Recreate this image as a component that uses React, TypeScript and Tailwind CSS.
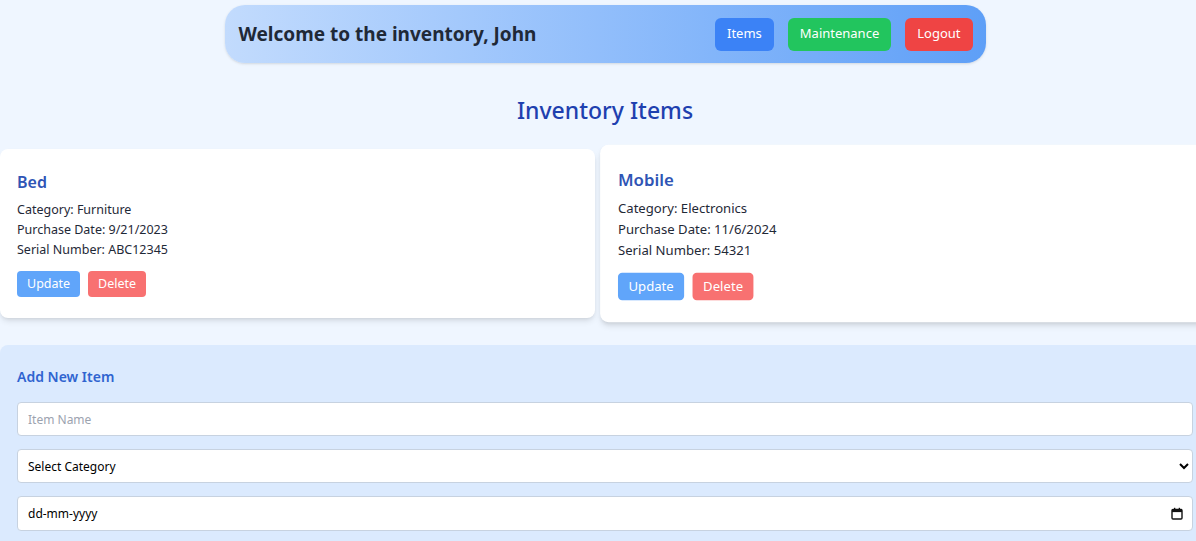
import React from "react";

const font = { fontFamily: '"Noto Sans", "Open Sans", sans-serif' };

function ItemCard({ name, category, date, serial, hovered }: { name: string; category: string; date: string; serial: string; hovered?: boolean }) {
  return (
    <div className={`bg-white rounded-lg shadow-md px-[17px] pt-[22px] h-[169px] ${hovered ? "scale-105" : ""}`}>
      <h2 className="text-[16px] leading-[22px] font-semibold text-[#2f55b5] mb-[7px]">{name}</h2>
      <p className="text-[12.5px] leading-[20px] text-[#1f2937]">Category: {category}</p>
      <p className="text-[12.5px] leading-[20px] text-[#1f2937]">Purchase Date: {date}</p>
      <p className="text-[12.5px] leading-[20px] text-[#1f2937]">Serial Number: {serial}</p>
      <div className="flex gap-[8px] mt-[11px]">
        <button className="h-[26px] px-[10px] rounded bg-[#60a5fa] text-white text-[12.5px]">Update</button>
        <button className="h-[26px] px-[10px] rounded bg-[#f87171] text-white text-[12.5px]">Delete</button>
      </div>
    </div>
  );
}

export default function App() {
  return (
    <div className="w-full h-[541px] overflow-hidden bg-[#eff6ff]" style={font}>
      <div className="w-[1210px]">
        <div className="pt-[5px] flex justify-center">
          <div className="w-[761px] h-[58px] rounded-[20px] bg-gradient-to-r from-[#c2dbfd] to-[#5e9ff7] shadow-sm flex items-center justify-between pl-[14px] pr-[13px]">
            <h1 className="text-[19px] font-bold text-[#1f2937]">Welcome to the inventory, John</h1>
            <div className="flex gap-[14px]">
              <button className="h-[33px] px-[12px] rounded-md bg-[#3b82f6] text-white text-[13px]">Items</button>
              <button className="h-[33px] px-[12px] rounded-md bg-[#22c55e] text-white text-[13px]">Maintenance</button>
              <button className="h-[33px] px-[12px] rounded-md bg-[#ef4444] text-white text-[13px]">Logout</button>
            </div>
          </div>
        </div>
        <h2 className="text-center text-[23px] leading-[32px] font-medium text-[#1e40af] mt-[31px]">Inventory Items</h2>
        <div className="grid grid-cols-2 gap-[20px] mt-[23px]">
          <ItemCard name="Bed" category="Furniture" date="9/21/2023" serial="ABC12345" />
          <ItemCard name="Mobile" category="Electronics" date="11/6/2024" serial="54321" hovered />
        </div>
        <div className="mt-[27px] bg-[#dbeafe] rounded-lg px-[17px] pt-[21px] pb-[20px]">
          <h3 className="text-[14px] leading-[22px] font-semibold text-[#2f64d0] mb-[14px]">Add New Item</h3>
          <div className="flex flex-col gap-[13px]">
            <input placeholder="Item Name" className="h-[34px] w-full bg-white border border-[#c7d2e0] rounded px-[10px] text-[12px] placeholder:text-[#9ca3af] outline-none" />
            <select className="h-[34px] w-full bg-white border border-[#c7d2e0] rounded px-[6px] text-[12px] text-black outline-none">
              <option>Select Category</option>
            </select>
            <div className="h-[35px] w-full bg-white border border-[#c7d2e0] rounded pl-[10px] pr-[9px] flex items-center">
              <input type="text" placeholder="dd-mm-yyyy" className="flex-1 text-[12px] text-black placeholder:text-black outline-none bg-transparent" />
              <svg width="12" height="13" viewBox="0 0 12 13" className="shrink-0">
                <rect x="1" y="2.5" width="10" height="9.5" rx="1" fill="none" stroke="#111" strokeWidth="1.4" />
                <rect x="1" y="2.5" width="10" height="2.6" fill="#111" />
                <rect x="3" y="0.8" width="1.3" height="2.2" fill="#111" />
                <rect x="7.7" y="0.8" width="1.3" height="2.2" fill="#111" />
              </svg>
            </div>
          </div>
        </div>
      </div>
    </div>
  );
}
